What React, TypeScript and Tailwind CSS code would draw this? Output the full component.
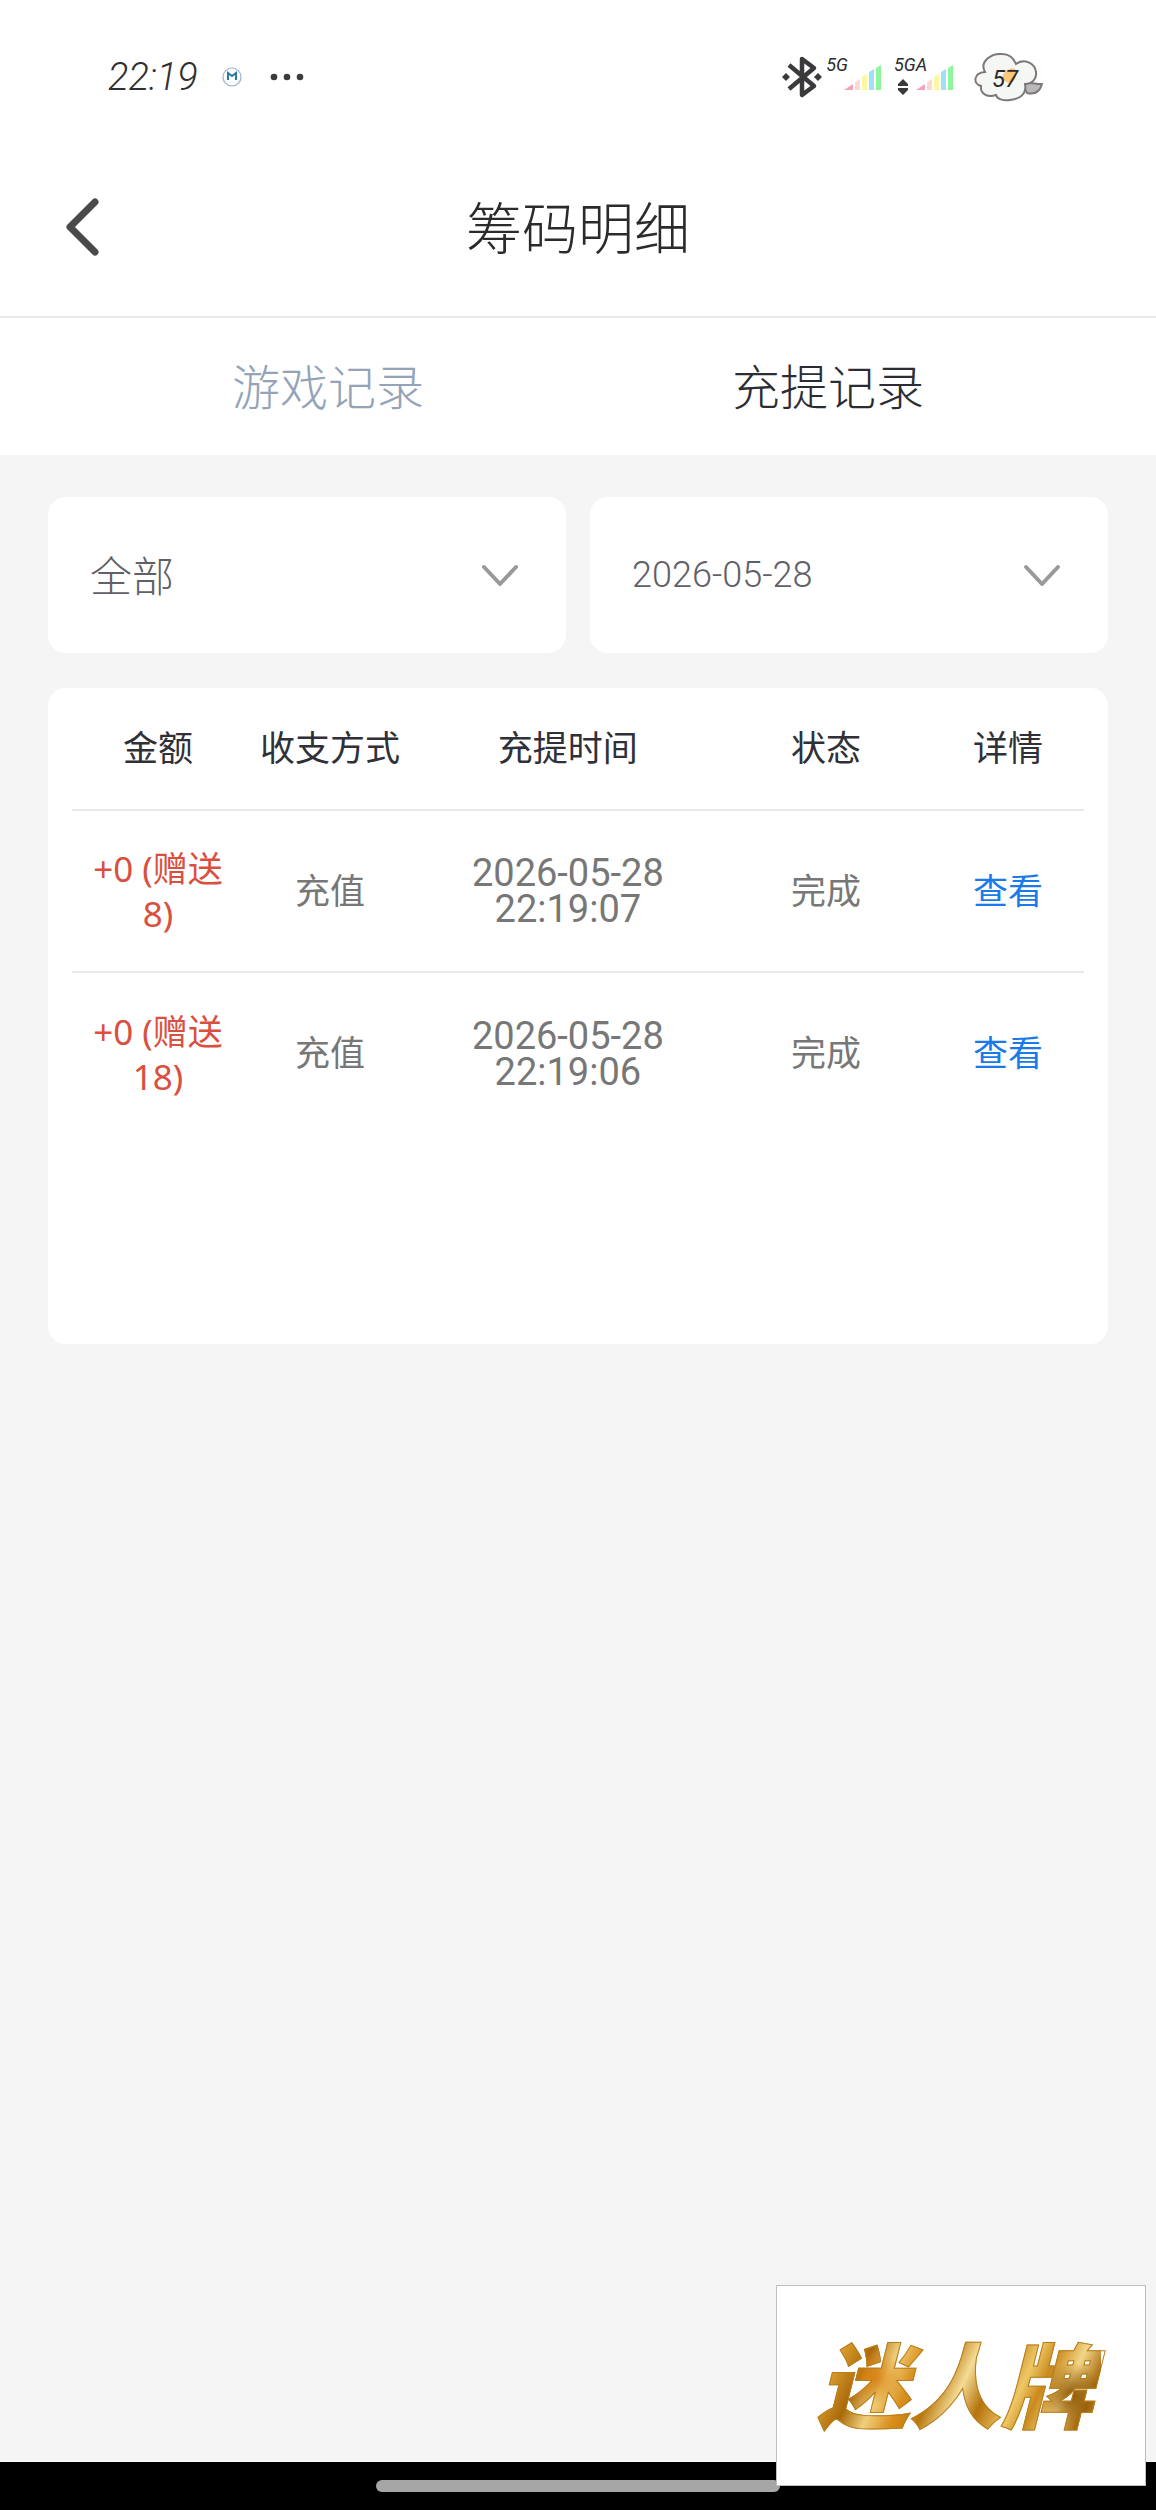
import React, { useState } from "react";

const records = [
  { amount: "+0 (赠送 8)", type: "充值", date: "2026-05-28", time: "22:19:07", status: "完成" },
  { amount: "+0 (赠送 18)", type: "充值", date: "2026-05-28", time: "22:19:06", status: "完成" },
];

const tabs = ["游戏记录", "充提记录"];

function SignalBars() {
  return (
    <svg viewBox="0 0 38 26" className="w-[38px] h-[26px]" aria-hidden="true">
      <path d="M0 25 L9 19 V25 Z" fill="#f3a3b5" />
      <path d="M11 17 L16 14 V25 H11 Z" fill="#fbd9d3" />
      <path d="M18 12 L23 9 V25 H18 Z" fill="#fbf7a2" />
      <path d="M25 7 L30 4 V25 H25 Z" fill="#a0e0f3" />
      <path d="M32 3 L37 0 V25 H32 Z" fill="#8df59c" />
    </svg>
  );
}

function BluetoothIcon() {
  return (
    <svg viewBox="0 0 40 44" className="w-10 h-11" aria-hidden="true">
      <path
        d="M7 10 L32 31 L20 40 V4 L32 13 L7 34"
        fill="none"
        stroke="#3a3a3d"
        strokeWidth="4.5"
        strokeLinejoin="round"
      />
      <path d="M4 18 L8 22 L4 26 L0 22 Z M36 18 L40 22 L36 26 L32 22 Z" fill="#3a3a3d" />
    </svg>
  );
}

function BatteryCloud() {
  return (
    <svg viewBox="0 0 70 50" className="w-[70px] h-[50px]" aria-hidden="true">
      <path
        d="M49 34 C54 28 62 33 68 32 C66 39 61 43 53 41 Z"
        fill="#b9b9b9"
        stroke="#7d7779"
        strokeWidth="2"
        strokeLinejoin="round"
      />
      <path
        d="M11 20 C5 9 18 1 28 2 C36 2 40 7 42 12 C50 6 61 11 62 20 C63 27 58 32 51 32 C53 42 46 47 36 48 C29 49 23 47 22 43 C14 46 6 42 7 34 C-1 32 -1 21 11 20 Z"
        fill="#f4f7f4"
        stroke="#7d7779"
        strokeWidth="2"
      />
      <path d="M34 18 C39 14 44 17 42 24 C41 30 36 33 31 29 C27 25 29 20 34 18 Z" fill="#fdc777" />
      <text x="31" y="35" textAnchor="middle" className="font-['Roboto',sans-serif] italic text-[24px]" fill="#2b2b2b">
        57
      </text>
    </svg>
  );
}

function StatusBar() {
  return (
    <div className="flex h-[154px] items-center justify-between pl-[108px] pr-[112px]">
      <div className="flex items-center">
        <span className="font-['Roboto',sans-serif] text-[38px] font-light italic text-[#303030]">22:19</span>
        <svg viewBox="0 0 20 20" className="ml-6 w-5 h-5" aria-hidden="true">
          <circle cx="10" cy="10" r="9" fill="#fff" stroke="#9fb0d0" strokeWidth="1.2" />
          <path d="M6 13 V6 L10 9 L14 6 V13" fill="none" stroke="#2779a8" strokeWidth="2" />
        </svg>
        <svg viewBox="0 0 34 8" className="ml-7 w-[34px] h-2" fill="#3c3c3c" aria-hidden="true">
          <circle cx="4" cy="4" r="3.3" />
          <circle cx="17" cy="4" r="3.3" />
          <circle cx="30" cy="4" r="3.3" />
        </svg>
      </div>
      <div className="flex items-center">
        <BluetoothIcon />
        <div className="ml-1 flex h-11 items-start">
          <span className="font-['Roboto',sans-serif] text-lg leading-5 italic text-[#2b2b2b]">5G</span>
          <div className="-ml-1 self-end pb-2">
            <SignalBars />
          </div>
        </div>
        <div className="ml-3 flex h-11 items-start">
          <div className="flex w-[22px] flex-col">
            <span className="font-['Roboto',sans-serif] text-lg leading-5 italic text-[#2b2b2b]">5GA</span>
            <svg viewBox="0 0 10 16" className="ml-1 mt-1 w-[10px] h-4" fill="#3a3a3d" aria-hidden="true">
              <path d="M5 0 L10 5 V7 H0 V5 Z M0 9 H10 V11 L5 16 L0 11 Z" />
            </svg>
          </div>
          <div className="self-end pb-2">
            <SignalBars />
          </div>
        </div>
        <div className="ml-5">
          <BatteryCloud />
        </div>
      </div>
    </div>
  );
}

function FilterSelect({ label, options, textClass }: { label: string; options: string[]; textClass: string }) {
  return (
    <div className="relative h-[156px] flex-1">
      <select
        aria-label={label}
        className={`h-full w-full appearance-none rounded-[18px] bg-white px-[42px] text-[#5f6068] outline-none ${textClass}`}
      >
        {options.map((option) => (
          <option key={option}>{option}</option>
        ))}
      </select>
      <div className="pointer-events-none absolute inset-y-0 right-[46px] flex items-center">
        <svg viewBox="0 0 40 24" className="w-10 h-6" fill="none" aria-hidden="true">
          <path d="M4 4 L20 21 L36 4" stroke="#999" strokeWidth="4" strokeLinecap="round" strokeLinejoin="round" />
        </svg>
      </div>
    </div>
  );
}

export default function App() {
  const [activeTab, setActiveTab] = useState("充提记录");

  return (
    <div className="relative flex min-h-screen flex-col bg-[#f5f5f5] font-['Noto_Sans','Noto_Sans_CJK_SC',sans-serif]">
      <header className="bg-white">
        <StatusBar />
        <div className="border-b-2 border-[#e9e9e9] pb-4">
          <div className="grid h-[146px] grid-cols-[100px_1fr_100px] items-center">
            <button type="button" aria-label="返回" className="flex justify-end">
              <svg viewBox="0 0 36 60" className="w-9 h-[60px]" fill="none" aria-hidden="true">
                <path d="M31 5 L6 30 L31 55" stroke="#4a4a4a" strokeWidth="7" strokeLinecap="round" strokeLinejoin="round" />
              </svg>
            </button>
            <h1 className="text-center text-[56px] leading-none font-light text-[#2b2b2b]">筹码明细</h1>
          </div>
        </div>
        <nav className="grid h-[137px] grid-cols-2 px-[78px]">
          {tabs.map((tab) => (
            <button
              key={tab}
              type="button"
              onClick={() => setActiveTab(tab)}
              className={`text-5xl font-light ${activeTab === tab ? "text-[#2c2c35]" : "text-[#93a3b8]"}`}
            >
              {tab}
            </button>
          ))}
        </nav>
      </header>

      <main className="flex-1 px-12 pt-[42px]">
        <div className="flex gap-6">
          <FilterSelect label="类型" options={["全部"]} textClass="text-[42px] font-light" />
          <FilterSelect label="日期" options={["2026-05-28"]} textClass="font-['Roboto',sans-serif] text-4xl font-light" />
        </div>

        <section className="mt-[35px] min-h-[656px] rounded-[18px] bg-white px-6">
          <table className="w-full table-fixed text-center text-[35px] text-[#777]">
            <colgroup>
              <col className="w-[17%]" />
              <col className="w-[17%]" />
              <col className="w-[30%]" />
              <col className="w-[21%]" />
              <col className="w-[15%]" />
            </colgroup>
            <thead>
              <tr className="h-[122px] border-b-2 border-[#e8eaea] text-[#303038]">
                <th className="font-normal">金额</th>
                <th className="font-normal">收支方式</th>
                <th className="font-normal">充提时间</th>
                <th className="font-normal">状态</th>
                <th className="font-normal">详情</th>
              </tr>
            </thead>
            <tbody>
              {records.map((item, index) => (
                <tr key={index} className="h-[162px] border-b-2 border-[#e8eaea] last:border-b-0">
                  <td className="px-4 leading-[45px] text-[#d9503f]">{item.amount}</td>
                  <td>{item.type}</td>
                  <td className="font-['Roboto',sans-serif] text-[38px] leading-9">
                    <span className="block">{item.date}</span>
                    <span className="block">{item.time}</span>
                  </td>
                  <td>{item.status}</td>
                  <td>
                    <a href="#detail" className="text-[#1a7be8]">
                      查看
                    </a>
                  </td>
                </tr>
              ))}
            </tbody>
          </table>
        </section>
      </main>

      <footer className="flex h-12 items-center justify-center bg-black">
        <div className="h-3 w-[35%] rounded-full bg-[#a6a6a6]" />
      </footer>

      {/* floating brand badge */}
      <div className="absolute right-[10px] bottom-6 flex h-[201px] w-[370px] items-center justify-center border border-[#bfbfbf] bg-white pr-3">
        <span className="bg-[radial-gradient(circle_at_22%_40%,#d98212_0%,#d9821200_12%),radial-gradient(circle_at_90%_60%,#8f5a08_0%,#8f5a0800_12%),linear-gradient(115deg,#a5690c_0%,#e2a534_10%,#a9690a_20%,#f0cf7c_28%,#d98f1c_36%,#b8780f_44%,#f5dc95_52%,#b5730d_60%,#efc766_70%,#c98a1c_76%,#f3d688_84%,#a5680c_92%,#e6b144_100%)] bg-clip-text px-2 text-[92px] leading-none font-black italic text-transparent [-webkit-text-stroke:1px_#b87d1c]">
          迷人牌
        </span>
      </div>
    </div>
  );
}
